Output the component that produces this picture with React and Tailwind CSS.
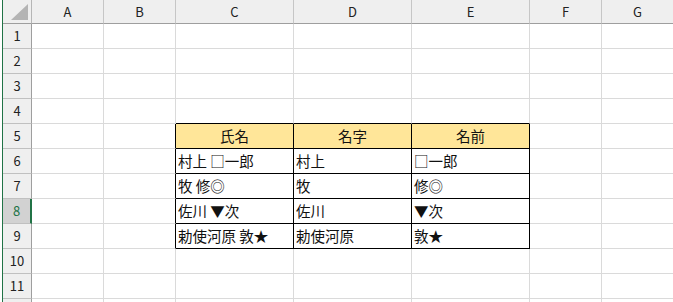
const COLS = [
  { name: "A", w: "w-[72px]" },
  { name: "B", w: "w-[72px]" },
  { name: "C", w: "w-[118px]" },
  { name: "D", w: "w-[118px]" },
  { name: "E", w: "w-[118px]" },
  { name: "F", w: "w-[72px]" },
  { name: "G", w: "w-[72px]" },
];

// table lives in C5:E9
const TABLE = {
  5: ["氏名", "名字", "名前"],
  6: ["村上 □一郎", "村上", "□一郎"],
  7: ["牧 修◎", "牧", "修◎"],
  8: ["佐川 ▼次", "佐川", "▼次"],
  9: ["勅使河原 敦★", "勅使河原", "敦★"],
};

const ROWS = [1, 2, 3, 4, 5, 6, 7, 8, 9, 10, 11, 12];

function Cell({ row, col, ci }) {
  const inTable = row >= 5 && row <= 9 && ci >= 2 && ci <= 4;
  const isHead = row === 5 && inTable;
  const text = inTable ? TABLE[row][ci - 2] : "";

  let rb = "border-r-[#dadada]";
  let bb = "border-b-[#dadada]";
  if (inTable) {
    rb = "border-r-black";
    bb = "border-b-black";
  }
  if (ci === 1 && row >= 5 && row <= 9) rb = "border-r-black";
  if (row === 4 && ci >= 2 && ci <= 4) bb = "border-b-black";

  return (
    <div
      className={`${col.w} h-[25px] shrink-0 border-r border-b ${rb} ${bb} flex items-center text-[14.5px] leading-none text-[#111] ${
        isHead ? "bg-[#ffe699] justify-center" : "bg-white pl-[2px]"
      }`}
    >
      <span className="whitespace-pre pt-[1px]">{text}</span>
    </div>
  );
}

export default function App() {
  return (
    <div
      className="w-[673px] h-[302px] overflow-hidden bg-white pl-[2px]"
      style={{ fontFamily: '"Noto Sans CJK JP", "Noto Sans", sans-serif' }}
    >
      <div className="border-l border-[#217346] h-full">
        {/* column header */}
        <div className="flex h-[24px]">
          <div className="w-[29px] shrink-0 border-r border-b border-r-[#b6b6b6] border-b-[#9e9e9e] bg-[#efefef] relative">
            <svg className="absolute left-[8px] top-[4px]" width="17" height="16" viewBox="0 0 17 16">
              <polygon points="17,0 17,16 0,16" fill="#b4b4b4" />
            </svg>
          </div>
          {COLS.map((c) => (
            <div
              key={c.name}
              className={`${c.w} shrink-0 border-r border-b border-r-[#c6c6c6] border-b-[#9e9e9e] bg-[#efefef] flex items-center justify-center text-[13px] text-[#222]`}
            >
              {c.name}
            </div>
          ))}
        </div>

        {ROWS.map((r) => {
          const sel = r === 8;
          return (
            <div key={r} className="flex h-[25px]">
              <div
                className={`w-[29px] shrink-0 border-b border-b-[#c0c0c0] flex items-center justify-center text-[13px] ${
                  sel
                    ? "bg-[#d2d2d2] border-r-2 border-r-[#217346] text-[#217346]"
                    : "bg-[#efefef] border-r border-r-[#9e9e9e] text-[#222]"
                }`}
              >
                {r <= 11 ? r : ""}
              </div>
              {COLS.map((c, ci) => (
                <Cell key={c.name} row={r} col={c} ci={ci} />
              ))}
            </div>
          );
        })}
      </div>
    </div>
  );
}
